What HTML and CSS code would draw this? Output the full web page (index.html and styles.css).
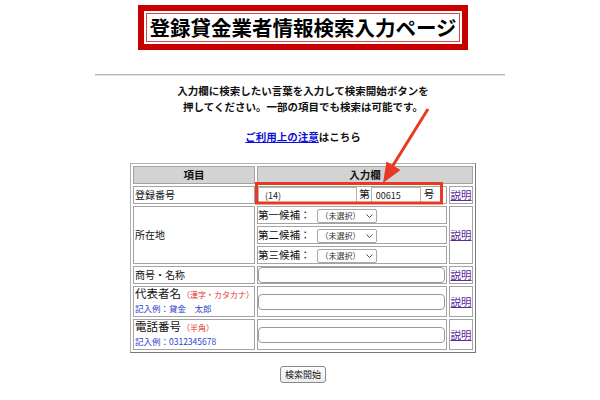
FILE: index.html
```html
<!DOCTYPE html>
<html lang="ja">
<head>
<meta charset="utf-8">
<title>登録貸金業者情報検索入力ページ</title>
<link rel="stylesheet" href="styles.css">
</head>
<body>
<div class="page">
  <div class="title-wrap">
    <div class="title-outer"><div class="title-inner">登録貸金業者情報検索入力ページ</div></div>
  </div>
  <hr class="rule">
  <p class="intro">入力欄に検索したい言葉を入力して検索開始ボタンを<br>押してください。一部の項目でも検索は可能です。</p>
  <p class="notice"><a href="#" class="notice-link">ご利用上の注意</a>はこちら</p>
  <table class="search">
    <colgroup><col class="c1"><col class="c2"><col class="c3"></colgroup>
    <tr><th>項目</th><th colspan="2">入力欄</th></tr>
    <tr>
      <td class="label">登録番号</td>
      <td class="field"><input class="reg1" value="(14)"> 第<input class="reg2" value="00615">号</td>
      <td class="ex"><a href="#">説明</a></td>
    </tr>
    <tr>
      <td class="label" rowspan="3">所在地</td>
      <td class="field">第一候補：<span class="sel">（未選択）<svg class="chev" width="7" height="4" viewBox="0 0 7 4"><polyline points="0.5,0.5 3.5,3.5 6.5,0.5" fill="none" stroke="#555" stroke-width="1"/></svg></span></td>
      <td class="ex" rowspan="3"><a href="#">説明</a></td>
    </tr>
    <tr>
      <td class="field">第二候補：<span class="sel">（未選択）<svg class="chev" width="7" height="4" viewBox="0 0 7 4"><polyline points="0.5,0.5 3.5,3.5 6.5,0.5" fill="none" stroke="#555" stroke-width="1"/></svg></span></td>
    </tr>
    <tr>
      <td class="field">第三候補：<span class="sel">（未選択）<svg class="chev" width="7" height="4" viewBox="0 0 7 4"><polyline points="0.5,0.5 3.5,3.5 6.5,0.5" fill="none" stroke="#555" stroke-width="1"/></svg></span></td>
    </tr>
    <tr>
      <td class="label">商号・名称</td>
      <td class="field"><input class="txt"></td>
      <td class="ex"><a href="#">説明</a></td>
    </tr>
    <tr class="tall">
      <td class="label"><span class="big">代表者名</span><span class="note">（漢字・カタカナ）</span><br><span class="eg">記入例：貸金　太郎</span></td>
      <td class="field"><input class="txt"></td>
      <td class="ex"><a href="#">説明</a></td>
    </tr>
    <tr class="tall">
      <td class="label"><span class="big">電話番号</span><span class="note">（半角）</span><br><span class="eg">記入例：0312345678</span></td>
      <td class="field"><input class="txt"></td>
      <td class="ex"><a href="#">説明</a></td>
    </tr>
  </table>
  <div class="actions"><button class="go" type="button">検索開始</button></div>
</div>
<svg class="overlay" width="600" height="400" viewBox="0 0 600 400">
  <line x1="428" y1="109" x2="392" y2="167" stroke="#e63a24" stroke-width="3"/>
  <polygon points="383,183 400.5,170 386.5,161.5" fill="#e63a24"/>
  <rect x="256.5" y="183.5" width="185" height="19.5" fill="none" stroke="#e63a24" stroke-width="3"/>
</svg>
</body>
</html>
```

FILE: styles.css
```css
html, body {
  margin: 0;
  padding: 0;
  background: #fff;
}
body {
  font-family: "Noto Sans CJK JP", "Noto Sans", sans-serif;
  color: #111;
  width: 600px;
  height: 400px;
  overflow: hidden;
  position: relative;
}
.page {
  padding-left: 6px;
}
.title-wrap {
  padding-top: 5px;
  text-align: center;
}
.title-outer {
  display: inline-block;
  border: 6px solid #c80000;
  padding: 2px;
  background: #fff;
}
.title-inner {
  border: 1px solid #d84848;
  padding: 0 2px;
  font-size: 20.5px;
  font-weight: 700;
  line-height: 27px;
  color: #000;
}
.rule {
  width: 410px;
  height: 0;
  margin: 24px 0 0 89px;
  border: 0;
  border-top: 1px solid #b8b8b8;
  border-bottom: 1px solid #e2e2e2;
}
.intro {
  margin: 7px 0 0;
  text-align: center;
  font-size: 10.5px;
  font-weight: 700;
  line-height: 16px;
}
.notice {
  margin: 14px 0 0;
  text-align: center;
  font-size: 10.5px;
  font-weight: 700;
  line-height: 16px;
}
.notice-link {
  color: #1010d8;
  text-decoration: underline;
}
.search {
  margin: 18px auto 0;
  width: 346px;
  table-layout: fixed;
  border-collapse: separate;
  border-spacing: 2px;
  border: 1px solid;
  border-color: #b0b0b0 #777 #777 #b0b0b0;
}
.c1 { width: 122px; }
.c2 { width: 190px; }
.c3 { width: 24px; }
.search th,
.search td {
  border: 1px solid #a4a4a4;
  padding: 0 1px;
  height: 18px;
  box-sizing: border-box;
  font-size: 10.5px;
  line-height: 14px;
  white-space: nowrap;
  overflow: hidden;
}
.search th {
  background: #d3d3d3;
  font-weight: 700;
  text-align: center;
}
.search td.label {
  font-size: 10px;
}
.search td.field {
  padding: 0;
}
.search td.ex {
  text-align: center;
  padding: 0;
}
.search td.ex a {
  color: #5a2a9a;
  text-decoration: underline;
}
.search tr.tall td {
  height: 30px;
}
.search tr.tall td.label {
  font-size: 6px;
  line-height: 13px;
}
.big {
  font-size: 11.5px;
  line-height: 13px;
}
.note {
  font-size: 8px;
  line-height: 13px;
  color: #e03228;
  margin-left: 1px;
}
.eg {
  font-size: 8.5px;
  line-height: 13px;
  color: #2b3fd0;
}
input {
  font-family: inherit;
  margin: 0;
  vertical-align: middle;
  box-sizing: border-box;
  outline: none;
}
.reg1,
.reg2 {
  height: 16px;
  border: 1px solid #b4b4b4;
  border-radius: 0;
  padding: 0 4px;
  font-size: 9px;
  color: #222;
  background: #fff;
}
.reg1 { width: 99px; padding-left: 6px; }
.reg2 { width: 50px; margin-left: 1px; margin-right: 3px; }
.txt {
  width: 187px;
  height: 16px;
  border: 1px solid #9a9a9a;
  border-radius: 4px;
  padding: 0 3px;
  background: #fff;
}
.sel {
  display: inline-flex;
  align-items: center;
  vertical-align: middle;
  height: 12px;
  margin-left: 6px;
  padding: 0 3px 0 3px;
  border: 1px solid #a8a8a8;
  border-radius: 2px;
  font-size: 8px;
  line-height: 10px;
  color: #333;
  background: #fff;
}
.chev {
  margin-left: 5px;
}
.actions {
  margin-top: 13px;
  display: flex;
  justify-content: center;
}
.go {
  font-family: inherit;
  font-size: 9px;
  line-height: 11px;
  padding: 2px 4px;
  border: 1px solid #8a8a8a;
  border-radius: 3px;
  background: linear-gradient(#ffffff, #ececec);
  color: #111;
}
.overlay {
  position: absolute;
  left: 0;
  top: 0;
  pointer-events: none;
}
```
